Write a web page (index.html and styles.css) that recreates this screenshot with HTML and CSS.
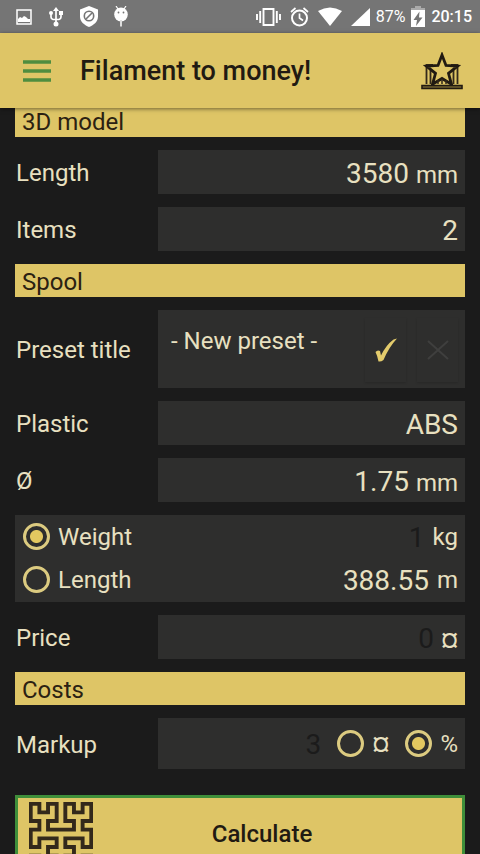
FILE: index.html
```html
<!DOCTYPE html>
<html lang="en">
<head>
<meta charset="utf-8">
<meta name="viewport" content="width=device-width, initial-scale=1">
<title>Filament to money!</title>
<link rel="stylesheet" href="styles.css">
</head>
<body>
<div class="status">
  <div class="status-left">
    <svg width="16" height="18" viewBox="0 0 16 18" aria-hidden="true"><path d="M1 2h14v14H1z" fill="none" stroke="#fff" stroke-width="1.500"/><path d="M2 14v-3l2-2 2 1 2-2 2 1 2 2 2 0v3z" fill="#fff"/></svg>
    <svg width="16" height="20" viewBox="0 0 16 20" aria-hidden="true"><path d="M8 3v13M3 7v3q0 2 2 2.500h6q2-.5 2-2.500V6" fill="none" stroke="#fff" stroke-width="1.700"/><path d="M8 0l3 4H5z" fill="#fff"/><circle cx="3" cy="6" r="2" fill="#fff"/><path d="M11 4h4v4h-4z" fill="#fff"/><circle cx="8" cy="17" r="2.500" fill="#fff"/></svg>
    <svg width="18" height="21" viewBox="0 0 18 21" aria-hidden="true"><path d="M9 0l9 3.500v7c0 5-4 8.500-9 10.500-5-2-9-5.500-9-10.500v-7z" fill="#fff"/><circle cx="9" cy="10" r="4.700" fill="none" stroke="#757575" stroke-width="1.600"/><path d="M6 13l6-6" stroke="#757575" stroke-width="1.600"/></svg>
    <svg width="14" height="21" viewBox="0 0 14 21" aria-hidden="true"><path d="M2 0l2 3M12 0l-2 3" stroke="#fff" stroke-width="1.200"/><ellipse cx="7" cy="8.500" rx="6.800" ry="7" fill="#fff"/><path d="M7 14v6.500" stroke="#ddd" stroke-width="2"/><circle cx="4.500" cy="6.500" r=".9" fill="#757575"/><circle cx="9.500" cy="6.500" r=".9" fill="#757575"/></svg>
  </div>
  <div class="status-right">
    <div class="status-icons">
      <svg width="25" height="20" viewBox="0 0 25 20" aria-hidden="true"><path d="M7.500 2h10v16h-10zM4.200 4v12M20.800 4v12M1 7v6M24 7v6" fill="none" stroke="#fff" stroke-width="1.900"/></svg>
      <svg width="19" height="20" viewBox="0 0 19 20" aria-hidden="true"><circle cx="9.500" cy="11" r="7.500" fill="none" stroke="#fff" stroke-width="2"/><path d="M9.500 6.500V11l3.500 2.500M1 5l4.500-4M18 5l-4.500-4" fill="none" stroke="#fff" stroke-width="1.700"/></svg>
      <svg width="24" height="20" viewBox="0 0 24 20" aria-hidden="true"><path d="M12 19L0 4Q12-3 24 4z" fill="#fff"/></svg>
      <svg width="19" height="20" viewBox="0 0 19 20" aria-hidden="true"><path d="M19 1v18H0z" fill="#fff"/></svg>
    </div>
    <span class="percent">87%</span>
    <svg width="14" height="22" viewBox="0 0 14 22" aria-hidden="true"><path d="M4 0h6v2h4v3H0V2h4z" fill="#aaa"/><path d="M0 4h14v17H0z" fill="#fff"/><path d="M8.500 5.500L2.500 14H6l-1 6 6.500-8.500H8z" fill="#757575"/></svg>
    <time class="clock">20:15</time>
  </div>
</div>
<header class="appbar">
  <button class="icon-button" aria-label="Menu">
    <svg width="30" height="24" viewBox="0 0 30 24"><path d="M1 3h28M1 12h28M1 21h28" stroke="#4f8d3f" stroke-width="3.400"/></svg>
  </button>
  <h1>Filament to money!</h1>
  <button class="icon-button" aria-label="Museum">
    <svg width="44" height="38" viewBox="0 0 44 38"><path d="M6.500 32V13H13M37.500 32V13H31M10.500 14v18M33.500 14v18M14 25v7M30 25v7" fill="none" stroke="#33291b" stroke-width="1.800"/><path d="M22 3l4 10.500 11.500.6-9 7.200 3 11L22 26.500 12.500 32.300l3-11-9-7.200 11.500-.6z" fill="#dec566" stroke="#211a12" stroke-width="2.800"/><path d="M18 28v4M22 27v5M26 28v4" stroke="#33291b" stroke-width="1.500"/><path d="M2 33.500h40v3H2z" fill="#70602f" stroke="#211a12" stroke-width="1.600"/></svg>
  </button>
</header>
<main>
  <form class="form">
    <h2>3D model</h2>
    <div class="row">
      <label for="length">Length</label>
      <div class="field"><input id="length" class="value" type="text" value="3580"><span>mm</span></div>
    </div>
    <div class="row">
      <label for="items">Items</label>
      <div class="field"><input id="items" class="value" type="text" value="2"></div>
    </div>
    <h2>Spool</h2>
    <div class="row">
      <label for="preset">Preset title</label>
      <div class="field preset">
        <select id="preset"><option>- New preset -</option></select>
        <button type="button" class="action" aria-label="Save preset"><svg width="24" height="26" viewBox="0 0 24 26"><path d="M1.500 15q2-2.500 4.500-1l1 4.500Q12 8 19.500 2.500l3.500-1Q15 10 9.500 23q-2.500 2-5 1.500Q3.500 19 1.500 15z" fill="#e3cb6c"/></svg></button>
        <button type="button" class="action" aria-label="Delete preset" disabled><svg width="24" height="26" viewBox="0 0 24 26"><path d="M2 4l20 18M22 4L2 22" stroke="#3f3f3e" stroke-width="2"/></svg></button>
      </div>
    </div>
    <div class="row">
      <label for="plastic">Plastic</label>
      <div class="field"><select id="plastic" class="value"><option>ABS</option></select></div>
    </div>
    <div class="row">
      <label for="diameter">Ø</label>
      <div class="field"><input id="diameter" class="value" type="text" value="1.75"><span>mm</span></div>
    </div>
    <div class="amounts">
      <div class="amount">
        <input id="by-weight" type="radio" name="amount" checked><label for="by-weight">Weight</label>
        <input class="value" type="text" placeholder="1" aria-label="Spool weight"><span>kg</span>
      </div>
      <div class="amount">
        <input id="by-length" type="radio" name="amount"><label for="by-length">Length</label>
        <input class="value" type="text" value="388.55" aria-label="Spool length"><span>m</span>
      </div>
    </div>
    <div class="row">
      <label for="price">Price</label>
      <div class="field"><input id="price" class="value" type="text" placeholder="0"><span>¤</span></div>
    </div>
    <h2>Costs</h2>
    <div class="row">
      <label for="markup">Markup</label>
      <div class="field markup">
        <input id="markup" class="value" type="text" placeholder="3">
        <div class="choice"><input id="flat" type="radio" name="markup-unit"><label for="flat">¤</label></div>
        <div class="choice"><input id="ratio" type="radio" name="markup-unit" checked><label for="ratio">%</label></div>
      </div>
    </div>
    <button type="button" class="calculate">
      <svg width="64" height="64" viewBox="-0.2 -0.2 7.4 7.4" aria-hidden="true"><path d="M0 7V6H1V7H3V6H2V5H3V4H1V5H0V3H1V2H0V0H1V1H2V0H3V2H2V3H5V2H4V0H5V1H6V0H7V2H6V3H7V5H6V4H4V5H5V6H4V7H6V6H7V7" fill="none" stroke="#33291b" stroke-width=".45" stroke-linecap="square"/></svg>
      <span>Calculate</span>
    </button>
  </form>
</main>
</body>
</html>
```
FILE: styles.css
```css
* {
  box-sizing: border-box;
}

body {
  margin: 0;
  height: 100vh;
  display: flex;
  flex-direction: column;
  overflow: hidden;
  background: #1b1b1b;
  color: #e8e0c0;
  font-family: Roboto, "Liberation Sans", sans-serif;
  font-size: 24px;
}

button,
input,
select {
  margin: 0;
  padding: 0;
  border: 0;
  background: none;
  color: inherit;
  font: inherit;
}

svg {
  display: block;
}

.status {
  flex: none;
  height: 33px;
  padding: 0 8px 0 16px;
  display: flex;
  align-items: center;
  justify-content: space-between;
  background: #757575;
  color: #fff;
}

.status-left {
  display: flex;
  align-items: center;
  gap: 16px;
}

.status-right {
  display: flex;
  align-items: center;
  gap: 6px;
}

.status-icons {
  display: flex;
  gap: 9px;
}

.percent {
  font-size: 16px;
}

.clock {
  font-size: 16px;
  font-weight: 500;
}

.appbar {
  position: relative;
  z-index: 1;
  flex: none;
  height: 75px;
  padding: 0 16px 0 22px;
  display: flex;
  align-items: center;
  background: #dec566;
  color: #211a12;
  box-shadow: 0 1px 4px rgba(0, 0, 0, .5);
}

.appbar h1 {
  flex: 1;
  margin: 0 0 0 28px;
  font-size: 27px;
  font-weight: 500;
}

main {
  flex: 1;
  min-height: 0;
  margin-top: -4px;
  padding: 0 15px;
  overflow-y: auto;
  scrollbar-width: none;
}

.form {
  display: flex;
  flex-direction: column;
  gap: 13px;
}

h2 {
  margin: 0;
  padding: 3px 0 0 7px;
  background: #dec566;
  color: #2b2112;
  font-size: 24px;
  font-weight: 400;
  line-height: 30px;
}

.row {
  display: grid;
  grid-template-columns: 143px minmax(0, 1fr);
  align-items: center;
}

.row > label {
  padding: 2px 0 0 1px;
}

.field,
.amounts {
  background: #2e2e2d;
}

.field {
  min-height: 44px;
  padding: 0 7px;
  display: flex;
  align-items: baseline;
  gap: 7px;
}

.value {
  flex: 1;
  min-width: 0;
  height: 44px;
  padding-top: 2px;
  font-size: 28px;
  text-align: right;
  text-align-last: right;
}

.value::placeholder {
  color: #1b1b1b;
  opacity: 1;
}

select {
  appearance: none;
}

.preset {
  height: 78px;
  padding: 8px 7px 6px 13px;
  align-items: stretch;
  gap: 11px;
}

.preset select {
  flex: 1;
  min-width: 0;
  height: 46px;
}

.action {
  width: 41px;
  display: flex;
  align-items: center;
  justify-content: center;
  box-shadow: 0 1px 2px rgba(0, 0, 0, .15);
}

input[type="radio"] {
  appearance: none;
  flex: none;
  width: 27px;
  height: 27px;
  border: 3px solid #dccb80;
  border-radius: 50%;
}

input[type="radio"]:checked {
  background: radial-gradient(circle, #e3c860 6px, transparent 7px);
}

.amounts {
  padding: 0 7px 1px 8px;
}

.amount {
  height: 43px;
  display: flex;
  align-items: center;
  gap: 8px;
}

.markup {
  height: 51px;
  align-items: center;
  gap: 16px;
}

.choice {
  display: flex;
  align-items: center;
  gap: 8px;
}

.calculate {
  margin-top: 13px;
  padding: 4px 11px;
  display: grid;
  grid-template-columns: 64px 1fr 20px;
  align-items: center;
  border: 3px solid #3f8f3a;
  background: #dec566;
  color: #211a12;
  font-weight: 500;
}
```
